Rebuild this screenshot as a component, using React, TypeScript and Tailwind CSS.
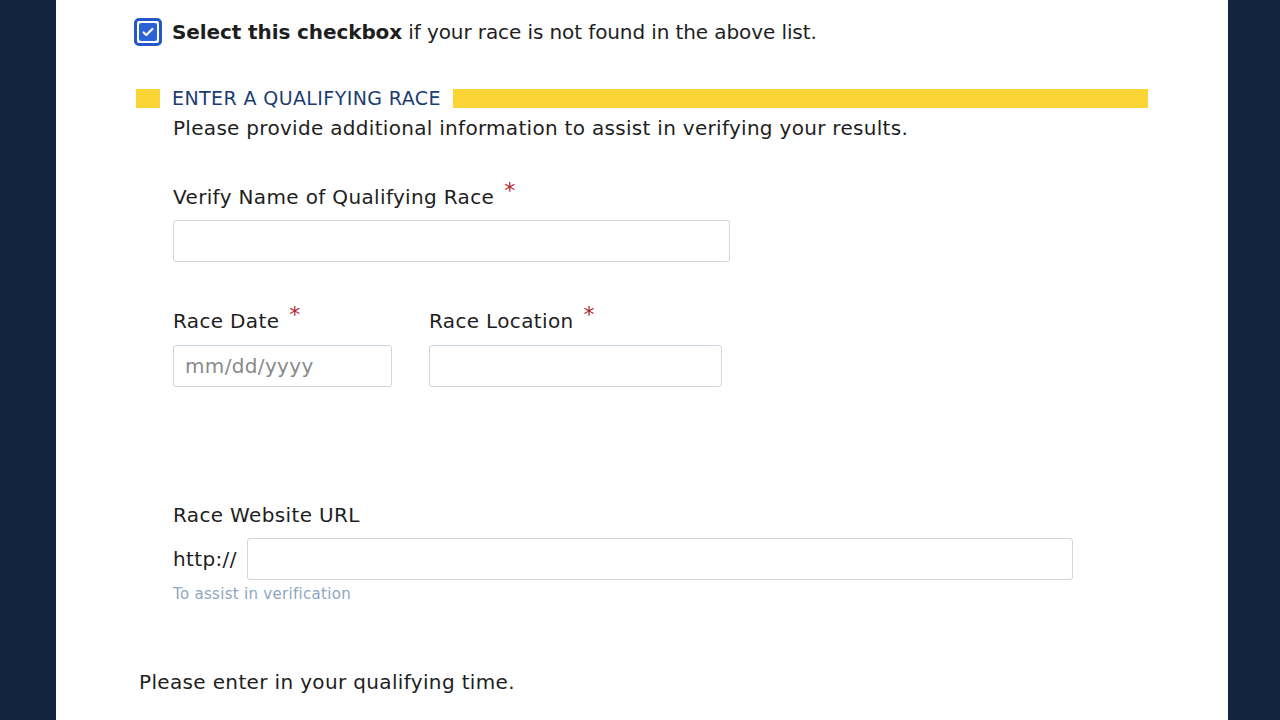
import React from "react";

const font = { fontFamily: '"DejaVu Sans", "Open Sans", sans-serif' };

function Required() {
  return <span className="relative -top-[4px] ml-[10px] text-[22px] leading-none text-[#b3262b]">*</span>;
}

function CheckBox() {
  return (
    <div className="flex h-[28px] w-[28px] items-center justify-center rounded-[5px] border-[3px] border-[#2458c8] bg-white">
      <div className="flex h-[18px] w-[18px] items-center justify-center rounded-[2px] bg-[#2a62d8]">
        <svg viewBox="0 0 16 16" className="h-[14px] w-[14px]" fill="none" stroke="white" strokeWidth="2.6" strokeLinecap="round" strokeLinejoin="round">
          <path d="M3 8.5l3 3 7-7" />
        </svg>
      </div>
    </div>
  );
}

export default function App() {
  return (
    <div className="flex h-[720px] w-[1280px] overflow-hidden bg-[#12243f] text-[#1e1e1e] tracking-[0.35px]" style={font}>
      <div className="ml-[56px] h-full w-[1172px] bg-white">
        <div className="flex items-center gap-[10px] pl-[78px] pt-[17px]">
          <CheckBox />
          <p className="text-[20px] tracking-[-0.1px]">
            <span className="font-bold">Select this checkbox</span> if your race is not found in the above list.
          </p>
        </div>

        <div className="mt-[42px] flex items-center pl-[80px] pr-[80px]">
          <div className="h-[19px] w-[24px] bg-[#fbd535]" />
          <div className="px-[12px] text-[19px] leading-[19px] tracking-[0.4px] text-[#1c3d72]">ENTER A QUALIFYING RACE</div>
          <div className="h-[19px] flex-1 bg-[#fbd535]" />
        </div>

        <div className="pl-[117px]">
          <p className="mt-[5px] text-[20px] tracking-[0.3px]">Please provide additional information to assist in verifying your results.</p>

          <label className="mt-[41px] flex items-start text-[20px] leading-[26px]">
            Verify Name of Qualifying Race
            <Required />
          </label>
          <input className="mt-[10px] block h-[42px] w-[557px] rounded-[3px] border border-[#cbd6df]" />

          <div className="mt-[46px] flex gap-[37px]">
            <div>
              <label className="flex items-start text-[20px] leading-[26px]">
                Race Date
                <Required />
              </label>
              <input
                placeholder="mm/dd/yyyy"
                className="mt-[11px] block h-[42px] w-[219px] rounded-[3px] border border-[#cbd6df] px-[11px] text-[20px] tracking-[0.35px] placeholder:text-[#8a8a8a]"
                style={font}
              />
            </div>
            <div>
              <label className="flex items-start text-[20px] leading-[26px]">
                Race Location
                <Required />
              </label>
              <input className="mt-[11px] block h-[42px] w-[293px] rounded-[3px] border border-[#cbd6df]" />
            </div>
          </div>

          <label className="mt-[115px] block text-[20px] leading-[26px]">Race Website URL</label>
          <div className="mt-[10px] flex items-center gap-[10px]">
            <span className="text-[20px]">http://</span>
            <input className="block h-[42px] w-[826px] rounded-[3px] border border-[#cbd6df]" />
          </div>
          <p className="mt-[3px] text-[15px] tracking-[0.3px] text-[#8ea6bf]">To assist in verification</p>
        </div>

        <p className="mt-[61px] pl-[83px] text-[20px]">Please enter in your qualifying time.</p>
      </div>
    </div>
  );
}
